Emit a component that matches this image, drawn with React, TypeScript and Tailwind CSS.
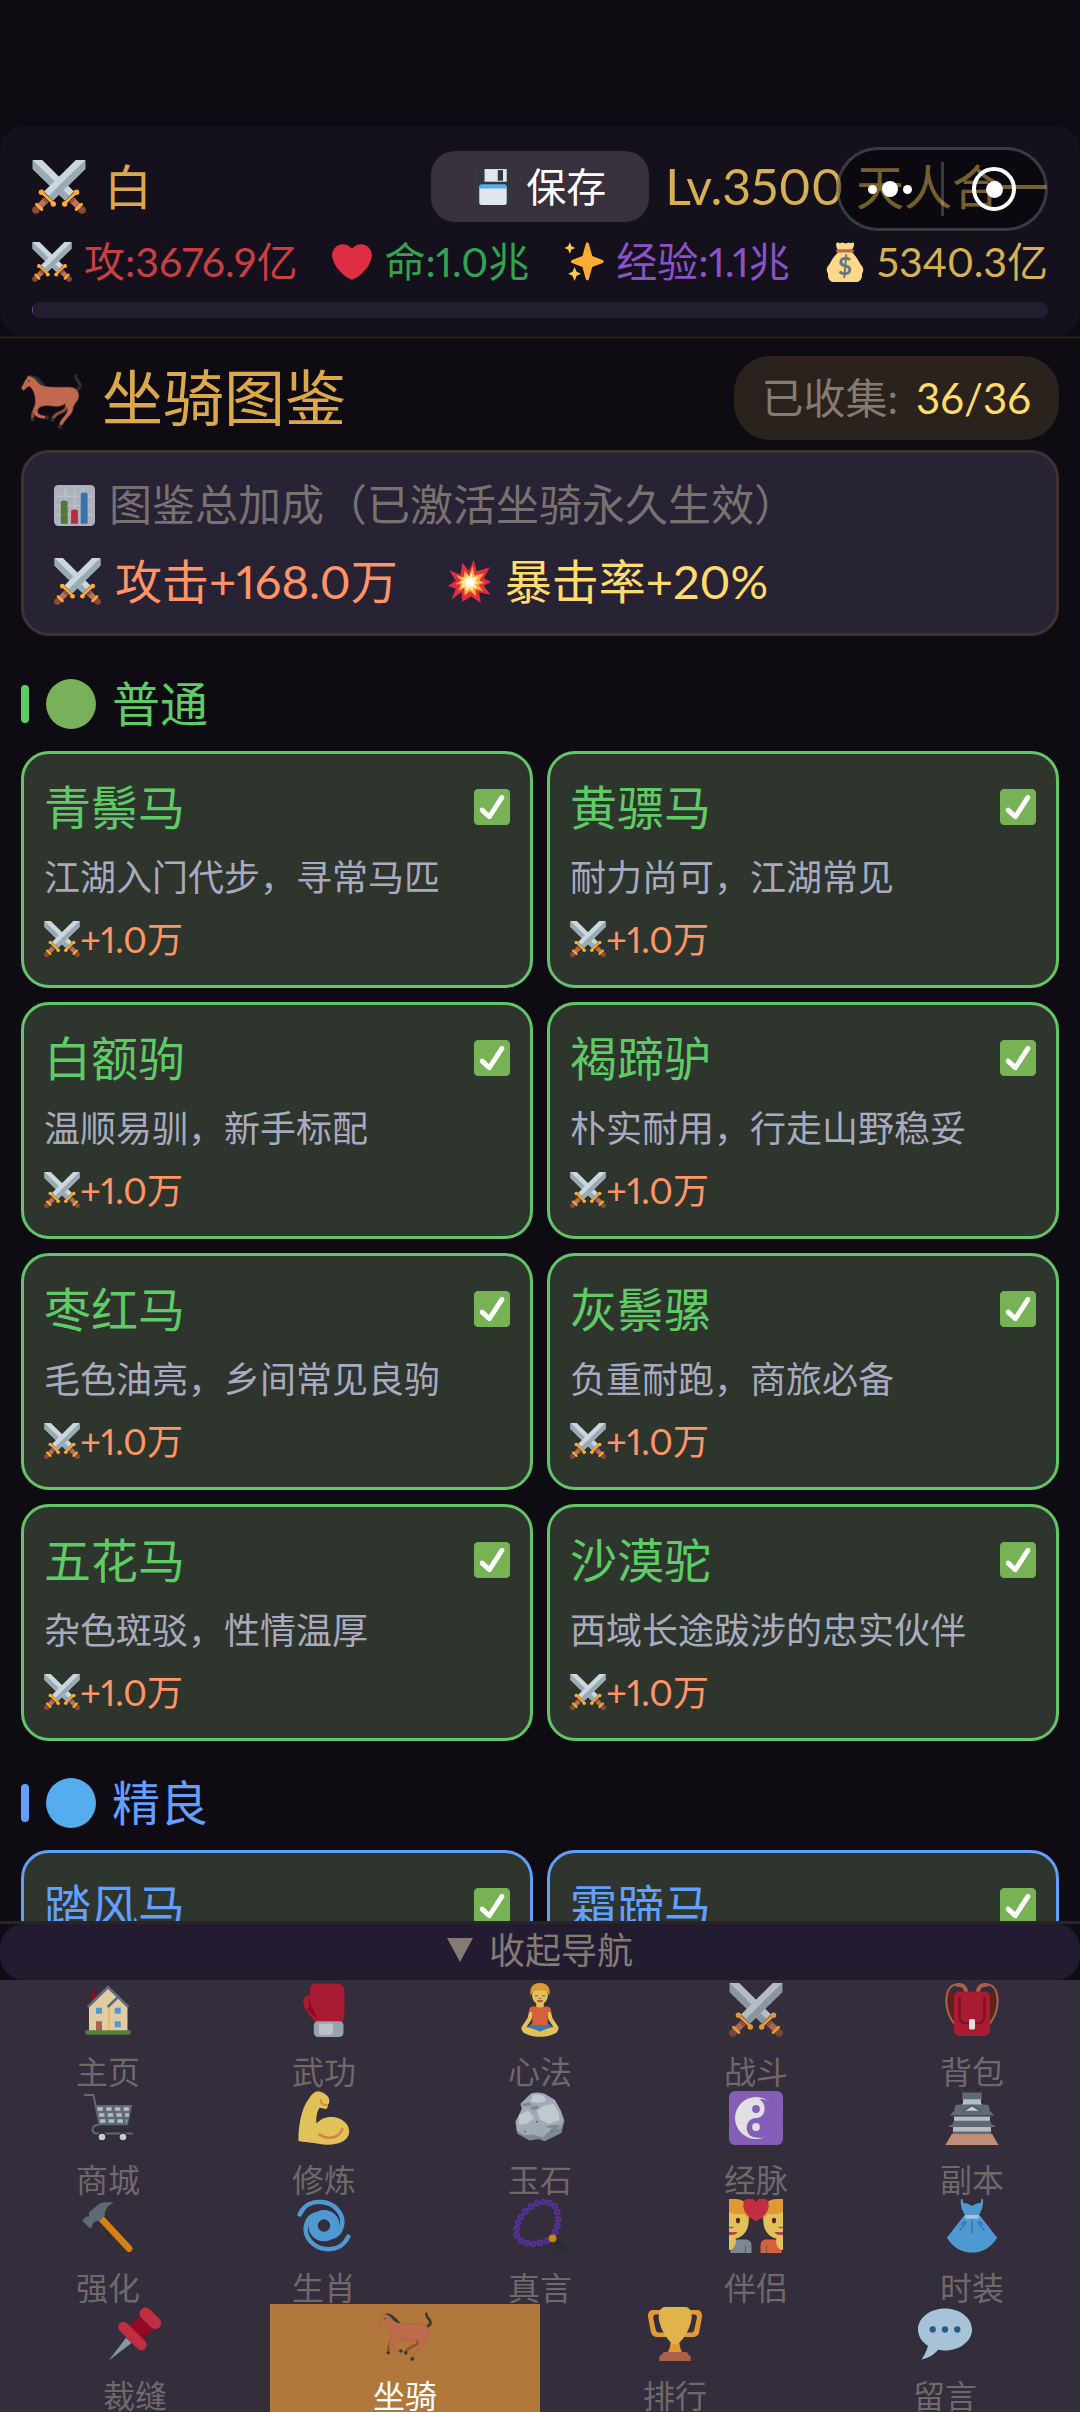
import { useState, type ReactNode } from 'react';
import clsx from 'clsx';

type IconName =
  | 'swords' | 'save' | 'heart' | 'sparkles' | 'money' | 'horse' | 'chart' | 'boom' | 'check'
  | 'home' | 'glove' | 'lotus' | 'backpack' | 'cart' | 'muscle' | 'rock' | 'yinyang' | 'castle'
  | 'hammer' | 'cyclone' | 'beads' | 'couple' | 'dress' | 'pin' | 'trophy' | 'chat';

const BEADS = [
  [20.2, 2], [24.4, 2.7], [27.8, 4.9], [29.6, 8.9], [30.2, 13.5], [29.6, 17.8], [28.2, 22],
  [22.4, 27.8], [18, 29.3], [13.6, 29.8], [9.3, 29.3], [5.1, 27.8], [2.4, 24.2], [2.4, 19.8],
  [3.3, 15.8], [5.3, 11.8], [8.4, 8.2], [11.8, 5.1], [15.8, 2.9],
];

// Mitad de la espada: hoja, guarda y empuñadura
const Sword = () => (
  <>
    <path fill="#CCD6DD" d="M35.5 0h-6.3L8 21l6 6L35.5 6z" />
    <path fill="#9AAAB4" d="M35.5 0v6L14 27l-3-3z" />
    <path stroke="#BE6F56" strokeWidth="4.4" d="M9.5 26.500 4 32" />
    <path stroke="#8A4B38" strokeWidth="1" d="m7 25.500 3.500 3.500" />
    <circle cx="2.600" cy="33.400" r="2.500" fill="#8A4B38" />
    <path stroke="#FFAC33" strokeWidth="2" strokeLinecap="round" d="m3 29.500 3.500 3.500M6.300 21.300l8 7.700" />
    <circle cx="6.300" cy="21.500" r="1.800" fill="#FFAC33" />
    <circle cx="14.200" cy="29.300" r="1.800" fill="#FFAC33" />
  </>
);

// Media pareja, la otra mitad se dibuja reflejada
const Half = ({ shirt }: { shirt: string }) => (
  <>
    <path fill={shirt} d="M1 36v-9h10c2.500 0 4 1.500 4 4v5z" />
    <path fill="#FFDC5D" d="M0 8h10l3 4c.5 3 0 7-2 10-2 2.700-5 4.500-8 4.500H0z" />
    <path fill="#FFAC33" d="M0 0h4c6 0 10 4 9.700 9 .3 2-.2 4-.8 5.500-.6-2.500-2-4.500-4-4.500C6 10.500 3 10 0 8.500z" />
    <ellipse cx="6" cy="14.300" rx="1.400" ry="1.800" fill="#662113" />
    <path stroke="#C1694F" strokeWidth="1" d="M0 19h3" />
    <path fill="#BF4B46" d="M0 22h5.500c0 1.500-2 2.200-5.500 2z" />
    <path fill="#FFDC5D" d="M0 25c3-.5 5 .5 4.500 4-.3 3-2 5-4.500 5z" />
    <path stroke="#5b6770" strokeWidth=".7" d="M11 31v5" />
  </>
);

const ICONS: Record<IconName, ReactNode> = {
  swords: (
    <>
      <g transform="matrix(-1 0 0 1 36 0)"><Sword /></g>
      <Sword />
    </>
  ),
  save: (
    <>
      <path fill="#31373D" d="M3 0h27l6 6v27c0 2-1 3-3 3H3c-2 0-3-1-3-3V3c0-2 1-3 3-3z" />
      <path fill="#E1E8ED" d="M10 1h21v12H10z" />
      <path fill="#31373D" d="M22.500 2h5v10h-5z" />
      <path fill="#E1E8ED" d="M5 17h26v16c0 1-1 2-2 2H7c-1 0-2-1-2-2z" />
      <path fill="#55ACEE" d="M6.500 15.500h23L31 17v2.500H5V17z" />
    </>
  ),
  heart: (
    <path
      fill="#DD2E44"
      d="M35.885 11.833c0-5.450-4.418-9.868-9.867-9.868-3.308 0-6.227 1.633-8.018 4.129-1.791-2.496-4.710-4.129-8.017-4.129-5.450 0-9.868 4.417-9.868 9.868 0 .772.098 1.520.266 2.241C1.751 22.587 11.216 31.568 18 34.034c6.783-2.466 16.249-11.447 17.617-19.959.170-.721.268-1.469.268-2.242z"
    />
  ),
  sparkles: (
    <>
      <path fill="#FFAC33" d="M21 .5c.8 0 1.200.6 1.400 1.300l3 10.800 9.300 3.600c1.400.6 1.400 2.200 0 2.800l-9.300 3.600-3 10.800c-.4 1.700-2.400 1.700-2.800 0l-3-10.800-9.300-3.600c-1.400-.6-1.400-2.200 0-2.800l9.300-3.600 3-10.800C19.800 1.100 20.200.5 21 .5z" />
      <path fill="#FFCC4D" d="m5.200.3 1.500 3.500 3.500 1.500-3.500 1.500-1.500 3.800-1.500-3.800L.2 5.300l3.500-1.500zM9.500 22.500l1.800 4.300 4 1.800-4 1.800-1.800 4.600-1.800-4.600-4-1.800 4-1.800z" />
    </>
  ),
  money: (
    <>
      <path fill="#FDD888" d="M12 7.500C10 5 9.500 2 10.500.7c1-.9 2.500.8 3.500.3 1-.6 2-.8 3.200 0 .8.500 1.700.500 2.600 0 1-.6 2-.4 3 0s2.300-1 3-.2c1 1.500 0 4.500-2.300 6.700zM12 9h12c3.500 3 6 7.500 8 11 3 3 3 6 1.300 8.500.5 3.500-1.300 7.500-5.300 7.500H8c-4 0-5.800-4-5.300-7.500C1 26 1 23 4 20c2-3.500 4.500-8 8-11z" />
      <path fill="#BF6952" d="M11 6.500h14c1.300 0 1.300 3 0 3H11c-1.300 0-1.300-3 0-3z" />
      <text x="18" y="30" textAnchor="middle" fontSize="22" fontFamily="Lato" fontWeight="700" fill="#67757F">$</text>
    </>
  ),
  horse: (
    <>
      <path stroke="#292F33" strokeWidth="1.800" strokeLinecap="round" fill="none" d="M32.200 4.500c0 3 3 3.500 2.800 6-.2 1.500-1 2-2 2.500" />
      <path stroke="#8A4B38" strokeWidth="1.800" fill="none" strokeLinejoin="round" d="M10 21c-1.500 3-3.500 4-3.200 8.500M27 21c0 4-2 4.500-4.500 5.500-2 .8-3 1.500-3.800 3.500" />
      <path fill="#C1694F" stroke="#A0553F" strokeWidth=".3" d="M4.300 4.500C6.500 5 9.500 6.500 11.500 9c1.500 1.800 4 2.300 7 2.300H28c4 0 6 2 6 5 0 3.700-3 4.500-3.300 7.500-.2 3-2.700 4.700-4.700 7.200l-2 3-1.300-.7c.8-3.500 4.500-5.300 4.800-8.300.1-1.500-1-2.500-1.500-4-2 1.800-6 2-9.500 1.200-3 0-5.500.3-6.500 2.300-1.200 2.300 1 3.500 5 4l-.3 1.300c-4.700-.2-8-1.500-7.200-5.500.3-1.800 1.200-2.800 1-5-.1-4-1.500-7-3.500-8.500-1.500 0-2 1.500-3.500 2.500L.2 11.800C1.500 10 2 7.500 3.500 6z" />
      <path fill="#292F33" d="M4.600 4.600C8 3.200 12 6.500 15 11c-3-.3-5-2-6.500-4.200C7.300 5.500 6 5 4.600 4.600z" />
      <g fill="#292F33">
        <circle cx="6.800" cy="30.500" r="1.200" />
        <circle cx="15.300" cy="29.300" r="1.200" />
        <circle cx="18.500" cy="30.600" r="1.200" />
        <circle cx="22.900" cy="34.600" r="1.300" />
      </g>
      <circle cx="4.600" cy="7.800" r=".5" fill="#292F33" />
    </>
  ),
  chart: (
    <>
      <rect width="36" height="36" rx="4" fill="#CCD6DD" />
      <path stroke="#E1E8ED" strokeWidth="1.500" fill="none" d="M2 10h32M2 18h32M2 26h32M10 2v32M18 2v32M26 2v32" />
      <path fill="#5C913B" d="M6 34V15c0-2 6-2 6 0v19z" />
      <path fill="#DD2E44" d="M15 34V23c0-2 6-2 6 0v11z" />
      <path fill="#3B88C3" d="M23.500 34V8c0-2 6-2 6 0v26z" />
    </>
  ),
  boom: (
    <>
      <path fill="#DD2E44" d="m21.500 0 2.600 9.500L35 6l-5 9.500 6 3-6 3 5.500 7.500-9.500-2 1.500 9-8-5.500L12 35l-.8-8-8.200 6 3.500-9L0 21.500l6.500-4.200L1 8.500l9.500 3.800L12 2l5.500 7.200z" />
      <path fill="#FFAC33" d="m20.500 5 1.700 8 7.800-2-3.800 6 4.300 2-5 2 4 5-6.500-1.500.5 6-5-4.500-4.500 4-.5-6.500-5 2.500 2.300-5.500L6 20l5-2.500L7 12.500l6 2.300 1-6 4 5z" />
      <path fill="#FFE8A0" d="m19.500 9 1.200 5.500 4.800-1-2.500 4 3 1.500-3.200 1.500 2.200 3.500-4.300-1 .3 3.500-3-2.700-3 2.500-.5-4-3.500 1 1.700-3.500-2.700-1.300 3.200-1.800-2-2.700 3.500 1 1-3.500 2 3z" />
      <circle cx="18.500" cy="18.500" r="3.600" fill="#FFF" />
    </>
  ),
  check: (
    <>
      <path fill="#77B255" d="M36 32c0 2.209-1.791 4-4 4H4c-2.209 0-4-1.791-4-4V4c0-2.209 1.791-4 4-4h28c2.209 0 4 1.791 4 4v28z" />
      <path fill="#FFF" d="M29.280 6.362c-1.156-.751-2.704-.422-3.458.736L14.936 23.877l-5.029-4.650c-1.014-.938-2.596-.875-3.533.138-.937 1.014-.875 2.596.139 3.533l7.209 6.666c.480.445 1.090.665 1.696.665.673 0 1.534-.282 2.099-1.139.332-.506 12.500-19.270 12.500-19.270.751-1.159.421-2.707-.737-3.458z" />
    </>
  ),
  home: (
    <>
      <path fill="#A0041E" d="M7 6h3.300v6H7z" />
      <path fill="#FFE8B6" d="M5.300 15 18 3l13 12v17H5.300z" />
      <path stroke="#FFCC4D" strokeWidth="1" d="M18.700 16v16" />
      <path stroke="#66757F" strokeWidth="1.700" fill="none" d="M4.500 16 18 2.700 31.700 16M17.800 16l6.700-6.500" />
      <path fill="#55ACEE" d="M10 16.500h4v4h-4zM22.500 16.500h4v4h-4zM22.500 25.500h4v4h-4z" />
      <path fill="#C1694F" d="M10 25.500h4V32h-4z" />
      <rect x="2.800" y="31.500" width="30.400" height="3" rx="1.500" fill="#5C913B" />
    </>
  ),
  glove: (
    <>
      <path fill="#BE1931" d="M12.500.4h14c3 0 5.200 2.200 5.200 5.200V18c0 3-.7 6-1 8H12L6 18c-1.500-2-2-5-1.800-6.500C4.800 9 7 7.500 8.700 8V4.500c0-2.500 1.500-4.100 3.800-4.100z" />
      <path fill="#A0041E" d="M8.700 7.500c-.5 4 .5 8 3 11.500l1.500 5L7 18c1.500-3 1-7 1.700-10.500z" />
      <rect x="11.200" y="25.500" width="19.800" height="10.500" rx="2.800" fill="#AAB8C2" />
      <rect x="14.500" y="27" width="9.500" height="7.500" rx="2" fill="#D5DDE3" />
    </>
  ),
  lotus: (
    <>
      <path fill="#FFDC5D" d="M15.500 12h5v5h-5z" />
      <path stroke="#FFDC5D" strokeWidth="2.800" strokeLinecap="round" fill="none" d="M12.300 18.500 11 24l-4 6M23.700 18.500 25 24l4 6" />
      <path fill="#3B88C3" d="M12.500 27h11l4 3.500L18 34l-9.500-3.500z" />
      <path fill="#FFDC5D" d="M6.500 29c3 .5 7 1 11.500 3.500 4.500-2.500 8.500-3 11.500-3.500 1.500 1 .5 3.800-1.500 4.700-4 2-7 2.300-10 2.100-3 .2-6-.1-10-2.100-2-.9-3-3.700-1.500-4.700z" />
      <path fill="#F4683A" d="M13.500 15.500c3 1 6 1 9 0 1.800.2 3 1.500 3 4h-2.300V28H12.800v-8.500h-2.300c0-2.500 1.200-3.800 3-4z" />
      <ellipse cx="18" cy="8.200" rx="5.300" ry="6" fill="#FFDC5D" />
      <path fill="#FFAC33" d="M11.800 8.500C10.700 3 13.500 0 18 0s7.500 3 6.200 8.500c-.5-1-.8-2.300-2-3.300-2.500-.5-5-.7-7.700.2-1.500.6-2.200 2-2.700 3.100z" />
      <path stroke="#C1694F" strokeWidth=".8" fill="none" d="M14.500 8.300c.8.500 1.500.5 2.200 0M19.300 8.300c.8.500 1.500.5 2.200 0M17.300 10.300h1.400" />
      <path fill="#BF4B46" d="M15.800 11.500h4.400c-.4 1.800-4 1.800-4.400 0z" />
    </>
  ),
  backpack: (
    <>
      <path fill="#662113" d="M3 4C0 10 1.500 20 7 28V8zM33 4c3 6 1.500 16-4 24V8z" />
      <path stroke="#C1694F" strokeWidth="2.600" fill="none" d="M14 6c0-4-3-5-6.500-4.700M22 6c0-4 3-5 6.500-4.700" />
      <path stroke="#C1694F" strokeWidth="1.400" fill="none" d="M8 1C2 1 .5 8 1 14c.5 5 2.500 10 5.500 13.500M28 1c6 0 7.500 7 7 13-.5 5-2.500 10-5.500 13.500" />
      <path fill="#BE1931" d="M10 5.600h16c2.500 0 4 1.700 4 4V31c0 2.700-1.500 4.300-4 4.300H10c-2.500 0-4-1.600-4-4.300V9.600c0-2.300 1.500-4 4-4z" />
      <path stroke="#8A0A20" strokeWidth="1.400" strokeLinecap="round" fill="none" d="M9.800 10v13c0 2.500 1.500 3.700 4 3.700h8.400c2.500 0 4-1.200 4-3.700V10" />
      <rect x="16" y="24" width="4" height="7" rx="1" fill="#FFF" />
    </>
  ),
  cart: (
    <>
      <path stroke="#66757F" strokeWidth="1.400" strokeLinecap="round" fill="none" d="M2.500 2.700h5.800l4 19.500c-3 .5-4.800 2-4.600 3.700.2 1.500 1.500 2.400 3.300 2.400h23" />
      <path fill="#66757F" d="M9.500 9.300h24.700l-3 13.500H12z" />
      <path stroke="#CCD6DD" strokeWidth="2.300" strokeDasharray="3.600 2.200" d="M11 12h22M12 16h20M12.700 20h18" />
      <circle cx="14" cy="30.700" r="3.200" fill="#292F33" />
      <circle cx="28" cy="30.700" r="3.200" fill="#292F33" />
      <circle cx="14" cy="30.700" r="2.200" fill="#E1E8ED" />
      <circle cx="28" cy="30.700" r="2.200" fill="#E1E8ED" />
    </>
  ),
  muscle: (
    <>
      <path fill="#FFDC5D" d="M14 .2c3 .3 5.200 1.800 7 4 1 2.200.5 4.500-.5 5.200.3 1.200-.3 2.500-1.300 2.600-1.700 0-3-.8-4.200-.8-1.500 2.500-2.500 6-2 10.500 3-3.500 7-4.800 11-4.300 6 .5 10.800 4.600 10.800 9.600 0 5.500-6 8.800-14.300 8.800-4.500 0-8-1.300-12.500-1.500C6 34.100 1 33.500 1 33.500.700 25 2.500 12 8 5 9.500 2.500 12 .1 14 .2z" />
      <path stroke="#EF9645" strokeWidth="1.800" strokeLinecap="round" fill="none" d="M15 29c5 3.500 12.500 3 15.300-3.500" />
      <path stroke="#EF9645" strokeWidth="1.200" strokeLinecap="round" fill="none" d="M16 6c-.5 2 1 3 4 3.500" />
    </>
  ),
  rock: (
    <>
      <path fill="#8899A6" d="M11.500 2C15 .5 20 .7 23 3l5 3 4 7 2.300 7-2 8-5 2.500L21 33.500l-4-1.500-6 1-8-4.500-1.500-8L6 12l-1-3z" />
      <path fill="#B4C0C9" d="M12 1.800c4-1 8-.8 11 1.200l5 3.200 3.500 6.800 2.300 6-2.300 6-6.500 1-5 5-6.500-2-6 .5-5-3L2 20l4.200-8.500L5 8.500z" />
      <path fill="#DDE4E9" d="M13 2.700c3-.7 6-.3 8 1l1 3-5 1.300-5-1zM20 10l7-1.500 3.500 6 .5 5-7 2.500-6-3-2-6zM4 16l6-3 4 5-5 4-5 .5z" />
      <path fill="#8899A6" d="m5.500 8.800 5-1.300L13 9l-5 1.500zM11 11l5-1.500 1.500 2-4 1.500zM21 23.500l8-1 3 1-4 2.500z" />
      <g fill="#66757F">
        <circle cx="16" cy="20.500" r=".7" />
        <circle cx="26" cy="26.500" r=".7" />
        <circle cx="8" cy="27" r=".6" />
      </g>
    </>
  ),
  yinyang: (
    <>
      <rect width="36" height="36" rx="4" fill="#9266CC" />
      <circle cx="18" cy="18" r="14" fill="#FFF" />
      <path fill="#9266CC" d="M20 5.300A13 13 0 1 1 18 31c-8 0-8.500-12.500 0-13 7.500-.5 7-10.500 2-12.700z" />
      <circle cx="18" cy="12" r="2.600" fill="#9266CC" />
      <circle cx="18" cy="24" r="2.600" fill="#FFF" />
    </>
  ),
  castle: (
    <>
      <path fill="#CCD6DD" d="M12 5h12v3l2 3H10l2-3zM6 17h24v3H6zM5.300 23.500h25.400V28H5.300z" />
      <path fill="#66757F" d="M11.700.3 13 1h10l1.300-.7L24.500 5.500h-13zM10 9h16l3 .3 1 4 3 3H3l3-3 1-4zM6 19.800h24l1 2 3 2.200H2l3-2.200zM5.300 27h25.400v1.700H5.300z" />
      <path fill="#E1E8ED" d="m18 10.300 4.500 2.800h-9z" />
      <path stroke="#4E5C66" strokeWidth=".8" fill="none" d="m12 13.500 6-4 6 4" />
      <path fill="#D99E82" d="M4.500 28.700h27L35.700 36H.3z" />
    </>
  ),
  hammer: (
    <>
      <path stroke="#F4900C" strokeWidth="4.600" strokeLinecap="round" d="m13 12.500 19 20.500" />
      <path fill="#66757F" d="m.7 14.500 5.300 5c1.500-.3 1.500-1.700 1.800-3.200l2.500-1.800 2 .3 3.500-3.800c0-3.500 1.700-7 6.200-8.300C18 1.500 14 1.800 11.500 3.700L5.300 9v2.500L3 12z" />
    </>
  ),
  cyclone: (
    <g stroke="#55ACEE" fill="none">
      <circle cx="18" cy="17.700" r="7.300" strokeWidth="6.300" />
      <path strokeWidth="3" strokeLinecap="round" d="M1.800 10.300C5 3.500 11 1.500 16.500 2 25 2.600 31.500 10 30 17.500c-.7 3.500-3 6.500-6 7.500" />
      <path strokeWidth="3" strokeLinecap="round" d="M34.200 25.100c-3.200 6.800-9.200 8.800-14.700 8.300C11 32.800 4.500 25.400 6 17.900c.7-3.500 3-6.500 6-7.500" />
    </g>
  ),
  beads: (
    <>
      {BEADS.map(([x, y]) => (
        <g key={`${x}-${y}`}>
          <circle cx={x} cy={y} r="2.200" fill="#5B35A5" />
          <circle cx={x} cy={y} r="1" fill="#4A2A8C" />
        </g>
      ))}
      <path fill="#292F33" d="m27.500 27 4 1.500 4 4c.3 2-1.500 3.500-3.500 3l-4-4.500z" />
      <circle cx="26.400" cy="26.200" r="2.600" fill="#F4900C" />
    </>
  ),
  couple: (
    <>
      <Half shirt="#8899A6" />
      <g transform="matrix(-1 0 0 1 36 0)"><Half shirt="#F4683A" /></g>
      <path fill="#DD2E44" d="M26.500 4.500c0-6-6-6.500-8.500-2.500-2.500-4-8.500-3.500-8.500 2.500 0 4.500 4.500 8.500 8.500 10.300 4-1.800 8.500-5.800 8.500-10.300z" />
    </>
  ),
  dress: (
    <>
      <path fill="#55ACEE" d="M10.700 0h1l.5 2.500c2 .2 4 1 5.800 2.200 1.800-1.200 3.800-2 5.800-2.200l.5-2.500h1c.5 3.500-.5 7-2.500 10.500L34.800 25.800C30 33 24.500 35.700 18 35.700S6 33 1.200 25.800l12-15.300C11 7 10 3.500 10.700 0z" />
      <path fill="#BDDDF4" d="M13.500 10.700h9v2.400h-9z" />
      <path stroke="#3B88C3" strokeWidth="1.100" strokeLinecap="round" d="M18 14.500v8.500M14 15.500l-4 5.500M22 15.500l4 5.500M13 15l-2 2M23 15l2 2" />
    </>
  ),
  pin: (
    <>
      <path fill="#99AAB5" d="m12 20.500 3.700 3.500L.5 35.700z" />
      <path fill="#A0041E" d="m21 6 9.500 9-7.500 7-9.500-9z" />
      <path stroke="#DD2E44" strokeWidth="8" strokeLinecap="round" d="m25 4.300 6.500 6.400" />
      <path stroke="#DD2E44" strokeWidth="7" strokeLinecap="round" d="m10.300 13.300 12 12" />
    </>
  ),
  trophy: (
    <>
      <path fill="#FFAC33" d="M5.123 5h6C12.227 5 13 4.896 13 6V4c0-1.104-.773-2-1.877-2h-8c-2 0-3.583 2.125-3 5 0 0 1.791 9.375 1.917 9.958C2.373 18.500 4.164 20 6.081 20h6.958c1.105 0-.039-1.896-.039-3v-2c0 1.104-.773 2-1.877 2h-4c-1.104 0-1.833-1.042-2-2S3.539 7.667 3.539 7.667C3.206 5.750 4.018 5 5.123 5zm25.812 0h-6C23.831 5 22 4.896 22 6V4c0-1.104 1.831-2 2.935-2h8c2 0 3.584 2.125 3 5 0 0-1.633 9.419-1.771 10-.354 1.500-2.042 3-4 3h-7.146C21.914 20 22 18.104 22 17v-2c0 1.104 1.831 2 2.935 2h4c1.104 0 1.834-1.042 2-2s1.584-7.333 1.584-7.333C32.851 5.750 32.040 5 30.935 5zM20.832 22c0-6.958-2.709 0-2.709 0s-3-6.958-3 0-3.291 10-3.291 10h12.292s-3.292-3.042-3.292-10z" />
      <path fill="#FFCC4D" d="M29.123 6.577c0 6.775-6.770 18.423-11 18.423-4.231 0-11-11.649-11-18.423 0-5.742 2.769-6.577 5-6.577h12c2.231 0 5 .835 5 6.577z" />
      <path fill="#C1694F" d="M11.200 30h13.900c1 0 1.900.9 1.900 2 1 0 1.500.7 1.500 1.700V36h-21v-2.300c0-1 .7-1.700 1.700-1.700 0-1.100 1-2 2-2z" />
    </>
  ),
  chat: (
    <>
      <path fill="#BDDDF4" d="M18 1C8.059 1 0 7.268 0 15c0 4.368 2.574 8.268 6.604 10.835C6.080 28.144 4.859 31.569 2.300 35c5.158-.960 8.839-3.634 11.180-6.457 1.457.297 2.969.457 4.520.457 9.941 0 18-6.268 18-14S27.941 1 18 1z" />
      <g fill="#226699">
        <circle cx="9.800" cy="15" r="2.100" />
        <circle cx="18" cy="15" r="2.100" />
        <circle cx="26.200" cy="15" r="2.100" />
      </g>
    </>
  ),
};

const Icon = ({ name, className }: { name: IconName; className: string }) => (
  <svg viewBox="0 0 36 36" fill="none" aria-hidden="true" className={clsx('shrink-0', className)}>
    {ICONS[name]}
  </svg>
);

interface Mount {
  name: string;
  desc?: string;
  attack?: string;
}

interface MountGroup {
  title: string;
  dot: string;
  bar: string;
  text: string;
  border: string;
  mounts: Mount[];
}

const GROUPS: MountGroup[] = [
  {
    title: '普通',
    dot: 'bg-[#78b159]',
    bar: 'bg-[#5fcb66]',
    text: 'text-[#5fcb66]',
    border: 'border-[#63c468]',
    mounts: [
      { name: '青鬃马', desc: '江湖入门代步，寻常马匹', attack: '+1.0万' },
      { name: '黄骠马', desc: '耐力尚可，江湖常见', attack: '+1.0万' },
      { name: '白额驹', desc: '温顺易驯，新手标配', attack: '+1.0万' },
      { name: '褐蹄驴', desc: '朴实耐用，行走山野稳妥', attack: '+1.0万' },
      { name: '枣红马', desc: '毛色油亮，乡间常见良驹', attack: '+1.0万' },
      { name: '灰鬃骡', desc: '负重耐跑，商旅必备', attack: '+1.0万' },
      { name: '五花马', desc: '杂色斑驳，性情温厚', attack: '+1.0万' },
      { name: '沙漠驼', desc: '西域长途跋涉的忠实伙伴', attack: '+1.0万' },
    ],
  },
  {
    title: '精良',
    dot: 'bg-[#55acee]',
    bar: 'bg-[#629fff]',
    text: 'text-[#629fff]',
    border: 'border-[#629ff5]',
    mounts: [{ name: '踏风马' }, { name: '霜蹄马' }],
  },
];

const STATS: { icon: IconName; label: string; color: string }[] = [
  { icon: 'swords', label: '攻:3676.9亿', color: 'text-[#c93f42]' },
  { icon: 'heart', label: '命:1.0兆', color: 'text-[#32a350]' },
  { icon: 'sparkles', label: '经验:1.1兆', color: 'text-[#8b52c8]' },
  { icon: 'money', label: '5340.3亿', color: 'text-[#d6b052]' },
];

// Las tres primeras filas tienen 5 columnas, la última 4
const NAV_ROWS: { icon: IconName; label: string }[][] = [
  [
    { icon: 'home', label: '主页' },
    { icon: 'glove', label: '武功' },
    { icon: 'lotus', label: '心法' },
    { icon: 'swords', label: '战斗' },
    { icon: 'backpack', label: '背包' },
  ],
  [
    { icon: 'cart', label: '商城' },
    { icon: 'muscle', label: '修炼' },
    { icon: 'rock', label: '玉石' },
    { icon: 'yinyang', label: '经脉' },
    { icon: 'castle', label: '副本' },
  ],
  [
    { icon: 'hammer', label: '强化' },
    { icon: 'cyclone', label: '生肖' },
    { icon: 'beads', label: '真言' },
    { icon: 'couple', label: '伴侣' },
    { icon: 'dress', label: '时装' },
  ],
  [
    { icon: 'pin', label: '裁缝' },
    { icon: 'horse', label: '坐骑' },
    { icon: 'trophy', label: '排行' },
    { icon: 'chat', label: '留言' },
  ],
];

/** Cápsula del sistema, flota sobre la cabecera */
const Capsule = () => (
  <div className="absolute top-[21px] right-8 flex h-[84px] w-[212px] items-center rounded-full border-3 border-white/20 bg-black/45">
    <button type="button" aria-label="更多" className="flex flex-1 items-center justify-center gap-[5px]">
      <span className="size-[9px] rounded-full bg-white" />
      <span className="size-4 rounded-full bg-white" />
      <span className="size-[9px] rounded-full bg-white" />
    </button>
    <span className="h-[54px] w-[3px] bg-white/20" />
    <button type="button" aria-label="关闭" className="flex flex-1 items-center justify-center">
      <span className="flex size-11 items-center justify-center rounded-full border-4 border-white">
        <span className="size-[17px] rounded-full bg-white" />
      </span>
    </button>
  </div>
);

const Header = () => (
  <header className="relative shrink-0 border-b-3 border-[#231c1d]">
    <div className="rounded-3xl bg-[#14101c] px-8 pt-[25px] pb-[18px]">
      <div className="flex h-[71px] items-center text-[48px] leading-[60px]">
        <Icon name="swords" className="size-[54px]" />
        <span className="ml-[18px] text-[#dba84c]">白</span>
        <button
          type="button"
          className="ml-auto flex h-[71px] w-[218px] items-center justify-center gap-[14px] rounded-3xl bg-[#38313d] text-[40px] leading-[48px] text-white"
        >
          <Icon name="save" className="size-[38px]" />
          保存
        </button>
        <p className="ml-4 flex items-baseline gap-3 text-[#d6b052]">
          <span className="text-[50px]">Lv.3500</span>
          <span>天人合一</span>
        </p>
      </div>
      <div className="mt-4 flex items-center justify-between text-[41px] leading-[48px]">
        {STATS.map(stat => (
          <span key={stat.label} className={clsx('flex items-center gap-3', stat.color)}>
            <Icon name={stat.icon} className="size-10" />
            {stat.label}
          </span>
        ))}
      </div>
      <div className="mt-4 h-4 overflow-hidden rounded-full bg-[#231d30]">
        <div className="h-full w-px bg-[#7b4fb0]" />
      </div>
    </div>
    <Capsule />
  </header>
);

const MountCard = ({ mount, group }: { mount: Mount; group: MountGroup }) => (
  <li className={clsx('rounded-[28px] border-3 bg-[#2e352d] px-5 pt-[23px] pb-[22px]', group.border)}>
    <div className="flex items-center justify-between">
      <h3 className={clsx('text-[47px] leading-[60px]', group.text)}>{mount.name}</h3>
      <Icon name="check" className="size-9" />
    </div>
    {mount.desc && (
      <p className="mt-4 text-[36px] leading-[48px] whitespace-nowrap text-[#a9aabf]">{mount.desc}</p>
    )}
    {mount.attack && (
      <p className="mt-[14px] flex items-center text-[36px] leading-[48px] text-[#ff9466]">
        <Icon name="swords" className="size-9" />
        {mount.attack}
      </p>
    )}
  </li>
);

export default function App() {
  // Estado de la navegación inferior (abierta / plegada)
  const [navOpen, setNavOpen] = useState(true);
  const [active, setActive] = useState('坐骑');

  return (
    <div className="flex h-screen flex-col bg-[#0f0b12] pt-[126px] font-['Lato','Noto_Sans_CJK_SC',sans-serif] proportional-nums">
      <Header />

      <main className="min-h-0 flex-1 overflow-y-auto px-[21px] pt-[17px] [scrollbar-width:none]">
        <div className="flex items-center justify-between">
          <h1 className="flex items-center gap-5 text-[61px] leading-[72px] text-[#dba84c]">
            <Icon name="horse" className="size-[61px]" />
            坐骑图鉴
          </h1>
          <p className="flex h-[84px] items-center gap-[18px] rounded-[36px] bg-[#2a221c] px-7 text-[42px] leading-[48px] text-[#857b72]">
            已收集: <span className="text-[#ffdc6b]">36/36</span>
          </p>
        </div>

        {/* Bonificación total del compendio */}
        <section className="mt-[10px] mb-[38px] rounded-[28px] border-3 border-[#3f3331] bg-[#282235] px-[30px] pt-6 pb-[22px]">
          <p className="flex items-center gap-[14px] text-[43px] leading-[56px] text-[#79716f]">
            <Icon name="chart" className="size-[41px] opacity-80" />
            图鉴总加成（已激活坐骑永久生效）
          </p>
          <div className="mt-[18px] flex gap-[50px] text-[47px] leading-[60px]">
            <span className="flex items-center gap-[14px] text-[#ff9466]">
              <Icon name="swords" className="size-[47px]" />
              攻击+168.0万
            </span>
            <span className="flex items-center gap-[14px] text-[#ffdc6b]">
              <Icon name="boom" className="size-[43px]" />
              暴击率+20%
            </span>
          </div>
        </section>

        {GROUPS.map(group => (
          <section key={group.title} className="mb-8">
            <h2 className={clsx('flex items-center text-[48px] leading-[60px]', group.text)}>
              <span className={clsx('h-[38px] w-2 rounded-full', group.bar)} />
              <span className={clsx('ml-[17px] size-[50px] rounded-full', group.dot)} />
              <span className="ml-4">{group.title}</span>
            </h2>
            <ul className="mt-[17px] grid grid-cols-2 gap-[14px]">
              {group.mounts.map(mount => (
                <MountCard key={mount.name} mount={mount} group={group} />
              ))}
            </ul>
          </section>
        ))}
      </main>

      <nav className="shrink-0 border-t-3 border-[#2b2422] bg-[#110d18]">
        <button
          type="button"
          onClick={() => setNavOpen(!navOpen)}
          className="flex h-14 w-full items-center justify-center gap-4 rounded-3xl bg-[#231c31] pb-1 text-[36px] leading-[48px] text-[#857b72]"
        >
          <svg viewBox="0 0 26 24" aria-hidden="true" className={clsx('h-6 w-[26px]', !navOpen && 'rotate-180')}>
            <path fill="currentColor" d="M0 0h26L13 24z" />
          </svg>
          {navOpen ? '收起导航' : '展开导航'}
        </button>
        {navOpen && (
          <div className="bg-[#332d3c]">
            {NAV_ROWS.map(row => (
              <div key={row[0].label} className="flex">
                {row.map(item => (
                  <button
                    key={item.label}
                    type="button"
                    onClick={() => setActive(item.label)}
                    className={clsx(
                      'flex h-[108px] flex-1 flex-col items-center pt-[3px] text-[32px] leading-8',
                      item.label === active ? 'bg-[#b2773a] text-white' : 'text-[#70686a]',
                    )}
                  >
                    <Icon name={item.icon} className="size-[54px] opacity-85" />
                    <span className="mt-[19px]">{item.label}</span>
                  </button>
                ))}
              </div>
            ))}
          </div>
        )}
      </nav>
    </div>
  );
}
